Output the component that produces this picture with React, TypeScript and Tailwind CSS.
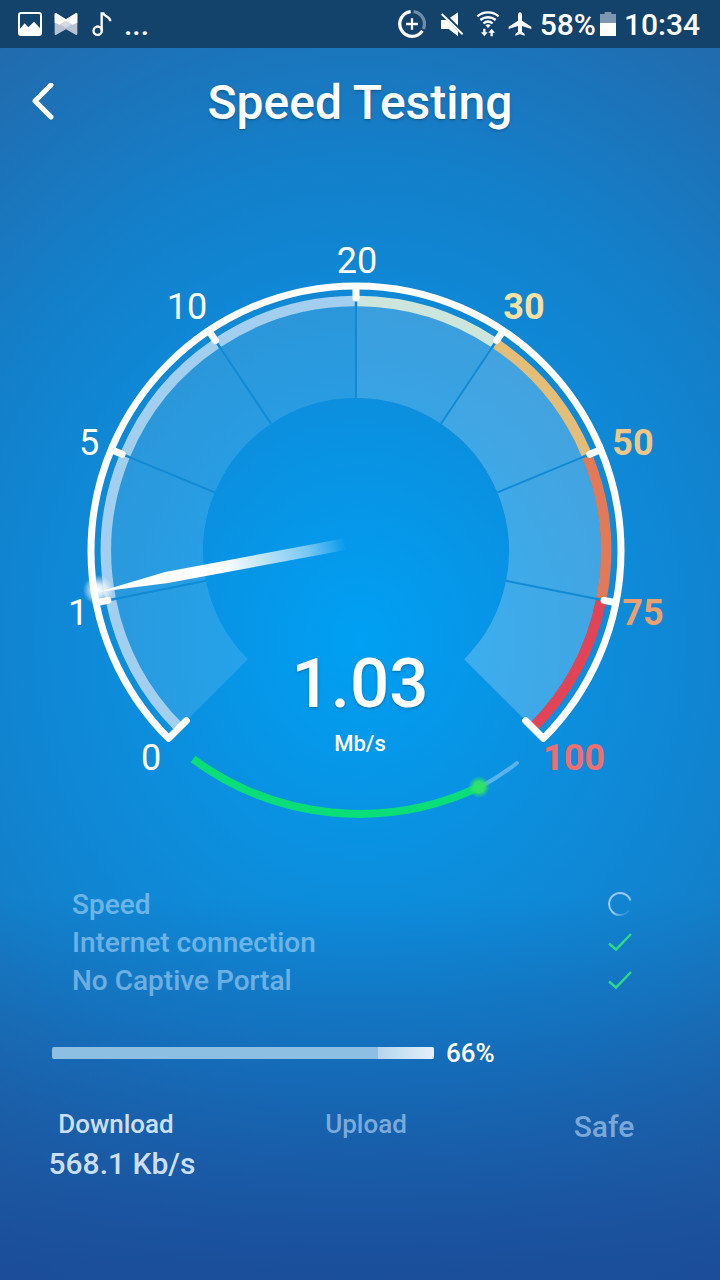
import type { ReactNode } from 'react';

const CX = 356;
const CY = 351;

// angle is measured clockwise from 12 o'clock
const point = (angle: number, r: number) => {
  const rad = (angle * Math.PI) / 180;
  return `${(CX + r * Math.sin(rad)).toFixed(2)} ${(CY - r * Math.cos(rad)).toFixed(2)}`;
};

const arc = (from: number, to: number, r: number) =>
  `M${point(from, r)}A${r} ${r} 0 ${to - from > 180 ? 1 : 0} 1 ${point(to, r)}`;

const sector = (from: number, to: number, outer: number, inner: number) =>
  `M${point(from, outer)}A${outer} ${outer} 0 0 1 ${point(to, outer)}L${point(to, inner)}A${inner} ${inner} 0 0 0 ${point(from, inner)}Z`;

const STEP = 33.75;

const segments = [
  { color: '#a2cfef', fill: 0.12 },
  { color: '#a2cfef', fill: 0.12 },
  { color: '#a2cfef', fill: 0.12 },
  { color: '#a2cfef', fill: 0.12 },
  { color: '#cde6dc', fill: 0.19 },
  { color: '#e4be79', fill: 0.22 },
  { color: '#e27a58', fill: 0.22 },
  { color: '#e24455', fill: 0.22 },
];

const labels = [
  { text: '0', x: 151, y: 570, color: '#ffffff', bold: false },
  { text: '1', x: 78, y: 425, color: '#ffffff', bold: false },
  { text: '5', x: 89, y: 255, color: '#ffffff', bold: false },
  { text: '10', x: 187, y: 119, color: '#ffffff', bold: false },
  { text: '20', x: 357, y: 73, color: '#ffffff', bold: false },
  { text: '30', x: 524, y: 119, color: '#f7e0a0', bold: true },
  { text: '50', x: 633, y: 255, color: '#eec688', bold: true },
  { text: '75', x: 643, y: 425, color: '#eba070', bold: true },
  { text: '100', x: 574, y: 570, color: '#ee6f6f', bold: true },
];

function Gauge() {
  return (
    <svg viewBox="0 0 720 640" className="block w-full" role="img" aria-label="Speed gauge">
      <defs>
        <linearGradient id="needle" gradientUnits="userSpaceOnUse" x1="98" y1="391" x2="346" y2="344">
          <stop offset="0" stopColor="#fff" />
          <stop offset="0.5" stopColor="#fff" />
          <stop offset="0.85" stopColor="#fff" stopOpacity="0.45" />
          <stop offset="1" stopColor="#fff" stopOpacity="0" />
        </linearGradient>
        <radialGradient id="tip">
          <stop offset="0" stopColor="#fff" />
          <stop offset="0.4" stopColor="#fff" stopOpacity="0.8" />
          <stop offset="1" stopColor="#fff" stopOpacity="0" />
        </radialGradient>
        <radialGradient id="dot">
          <stop offset="0" stopColor="#2fe26a" />
          <stop offset="0.5" stopColor="#2fe26a" stopOpacity="0.95" />
          <stop offset="1" stopColor="#1fd870" stopOpacity="0" />
        </radialGradient>
      </defs>

      {segments.map((s, i) => {
        const from = -135 + i * STEP;
        return (
          <g key={i}>
            <path d={sector(from, from + STEP, 245, 153)} fill="#fff" fillOpacity={s.fill} />
            <path d={arc(from + (i ? 0.3 : 0), from + STEP - 0.3, 250)} fill="none" stroke={s.color} strokeWidth="10.5" />
          </g>
        );
      })}

      {/* dividers and ticks */}
      {[1, 2, 3, 4, 5, 6, 7].map((i) => {
        const a = -135 + i * STEP;
        return (
          <g key={i}>
            <path d={`M${point(a, 246)}L${point(a, 153)}`} stroke="#108ad4" strokeWidth="2" />
            <path d={`M${point(a, 264)}L${point(a, 253)}`} stroke="#fff" strokeWidth="7" strokeLinecap="round" />
          </g>
        );
      })}
      <path
        d={`M${point(-135, 240)}L${point(-135, 265)}A265 265 0 1 1 ${point(135, 265)}L${point(135, 240)}`}
        fill="none"
        stroke="#fff"
        strokeWidth="7"
        strokeLinecap="round"
        strokeLinejoin="round"
      />

      {/* needle */}
      <circle cx="98" cy="390" r="15" fill="url(#tip)" />
      <path d="M98 392L165 372L346 338V350L168 383Z" fill="url(#needle)" />

      {/* progress arc */}
      <path d="M479 587.5Q499 577 517 563" fill="none" stroke="#fff" strokeOpacity="0.32" strokeWidth="4" strokeLinecap="round" />
      <path d="M193 559A280 280 0 0 0 479 587" fill="none" stroke="#0ade79" strokeWidth="8" />
      <circle cx="479" cy="587" r="11" fill="url(#dot)" />

      {labels.map((l) => (
        <text
          key={l.text}
          x={l.x}
          y={l.y}
          fill={l.color}
          textAnchor="middle"
          className={l.bold ? 'text-[36px] font-bold' : 'text-[36px] font-normal'}
        >
          {l.text}
        </text>
      ))}
    </svg>
  );
}

function StatusBar() {
  return (
    <div className="flex h-12 items-center justify-between bg-[#13426b] pr-5 pl-[18px] text-[30px]">
      <div className="flex items-center">
        <svg viewBox="0 0 72 72" className="h-6 w-6">
          <rect x="3" y="3" width="66" height="66" rx="6" fill="none" stroke="#fff" strokeWidth="6" />
          <path d="M6 50L20 34L31 46L48 29L68 50V68H6Z" fill="#fff" />
        </svg>
        <svg viewBox="0 0 72 72" className="ml-3 h-6 w-6">
          <path d="M2 5Q3 2 7 4L36 22L65 4Q69 2 70 5V66Q69 70 65 68L36 52L7 68Q3 70 2 66Z" fill="#b7c3d1" />
          <path d="M2 5Q3 2 7 4L36 22L65 4Q69 2 70 5V32L55 38L36 27L17 38L2 32Z" fill="#fff" />
          <path d="M36 26L53 37L36 48L19 37Z" fill="#d2dae4" />
        </svg>
        <svg viewBox="0 0 60 72" className="ml-[14px] h-6 w-5" fill="none" stroke="#fff" strokeWidth="7">
          <circle cx="17" cy="56" r="12.500" />
          <path d="M29 56V4H34C36 14 55 12 55 28" />
        </svg>
        <span className="ml-3 font-medium">...</span>
      </div>
      <div className="flex items-center">
        <svg viewBox="0 0 86 86" className="h-7 w-7" fill="none" stroke="#fff" strokeWidth="10">
          <path d="M39 5A38 38 0 1 0 75 64" />
          <path d="M48 5A38 38 0 0 1 78 58" strokeOpacity="0.4" />
          <path d="M43 25V61M25 43H61" strokeWidth="7" />
        </svg>
        <svg viewBox="0 0 72 78" className="ml-[14px] h-[26px] w-6" fill="#fff">
          <path d="M54 4V44L30 20Z" />
          <path d="M3 27H20L54 61V76L26 54H3Z" />
          <path d="M5 9L68 70" stroke="#fff" strokeWidth="6" />
        </svg>
        <svg viewBox="0 0 72 78" className="ml-3 h-[26px] w-6" fill="none" stroke="#fff" strokeWidth="7">
          <path d="M4 16C22 0 50 0 68 16" />
          <path d="M13 27C26 16 46 16 59 27" />
          <path d="M22 37C31 30 41 30 50 37" />
          <path d="M28 43Q36 36 44 43L36 51Z" fill="#fff" stroke="none" />
          <path d="M25 53V66M47 76V63" />
          <path d="M15 64H35L25 76ZM37 65H57L47 53Z" fill="#fff" stroke="none" />
        </svg>
        <svg viewBox="0 0 72 72" className="ml-2 h-6 w-6" fill="#fff">
          <path d="M36 1C40 1 42 5 42 9V26L70 44V51L42 42V59L50 66V71L36 67L22 71V66L30 59V42L2 51V44L30 26V9C30 5 32 1 36 1Z" />
        </svg>
        <span className="ml-2 font-medium">58%</span>
        <svg viewBox="0 0 48 72" className="ml-1 h-6 w-4">
          <path d="M0 6H14V0H34V6H48V34H0Z" fill="#7d97b0" />
          <path d="M0 33H48V72H0Z" fill="#fff" />
        </svg>
        <span className="ml-2 font-medium">10:34</span>
      </div>
    </div>
  );
}

function Check() {
  return (
    <svg viewBox="0 0 24 20" className="h-5 w-6" fill="none" stroke="#2fd98a" strokeWidth="2.500">
      <path d="M1 10.500L8 16.500L23 1" />
    </svg>
  );
}

function Spinner() {
  return (
    <svg viewBox="0 0 24 26" className="h-[26px] w-6" fill="none" strokeWidth="2">
      <defs>
        <linearGradient id="spin" x1="0.2" y1="0.3" x2="0.8" y2="1">
          <stop offset="0" stopColor="#9cc8f2" />
          <stop offset="0.5" stopColor="#9cc8f2" />
          <stop offset="1" stopColor="#9cc8f2" stopOpacity="0.1" />
        </linearGradient>
      </defs>
      <path d="M22.500 8.500A11 11 0 1 0 21 18.500" stroke="url(#spin)" />
    </svg>
  );
}

function CheckRow({ label, children }: { label: string; children: ReactNode }) {
  return (
    <li className="flex h-[38px] items-center justify-between">
      <span className="text-[#c8e6ff]/50">{label}</span>
      {children}
    </li>
  );
}

export default function App() {
  const percent = 66;

  return (
    <div className="min-h-screen bg-[linear-gradient(to_bottom,transparent_70%,#1a4a98e0_99%),radial-gradient(ellipse_650px_740px_at_50%_50%,#00a0f4,#0c8edd_34%,#1380cb_64%,#2369ab)] font-['Roboto',sans-serif] text-white">
      <StatusBar />

      <header className="relative flex h-[110px] items-center justify-center">
        <button type="button" aria-label="Back" className="absolute left-7 p-1">
          <svg viewBox="0 0 24 40" className="h-10 w-6" fill="none" stroke="#fff" strokeWidth="5" strokeLinecap="round" strokeLinejoin="round">
            <path d="M19 2L3 18L19 34" />
          </svg>
        </button>
        <h1 className="text-[48px] font-medium text-shadow-md">Speed Testing</h1>
      </header>

      <main>
        <section className="relative mt-[42px]">
          <Gauge />
          <div className="absolute inset-x-0 top-[70%] text-center">
            <div className="text-[69px] leading-[72px] font-medium text-shadow-md">1.03</div>
            <div className="mt-2 text-[22px] leading-8 font-medium">Mb/s</div>
          </div>
        </section>

        <ul className="mt-[46px] pr-[88px] pl-[72px] text-[28px] font-medium">
          <CheckRow label="Speed">
            <Spinner />
          </CheckRow>
          <CheckRow label="Internet connection">
            <Check />
          </CheckRow>
          <CheckRow label="No Captive Portal">
            <Check />
          </CheckRow>
        </ul>

        <div className="mt-[33px] flex h-10 items-center gap-3 px-[52px]">
          <div
            role="progressbar"
            aria-label="Test progress"
            aria-valuenow={percent}
            className="flex h-3 overflow-hidden rounded-xs bg-[#8cbfe1]"
            style={{ width: `${percent - 4}%` }}
          >
            <div className="ml-auto w-14 bg-linear-to-r from-[#b4d5ed] to-[#e4f0f8]" />
          </div>
          <span className="text-[26px] font-medium">{percent}%</span>
        </div>

        <div className="-mr-1 mt-[31px] grid grid-cols-3 pl-1 text-center font-medium">
          <div className="pr-1 text-[#e4f1ff]/90">
            <div className="pr-3 text-[26px] leading-10">Download</div>
            <div className="text-[30px] leading-10">568.1 Kb/s</div>
          </div>
          <div className="pl-1 text-[26px] leading-10 text-[#bfdcfa]/60">Upload</div>
          <div className="text-[30px] leading-[46px] text-[#bfdcfa]/60">Safe</div>
        </div>
      </main>
    </div>
  );
}
